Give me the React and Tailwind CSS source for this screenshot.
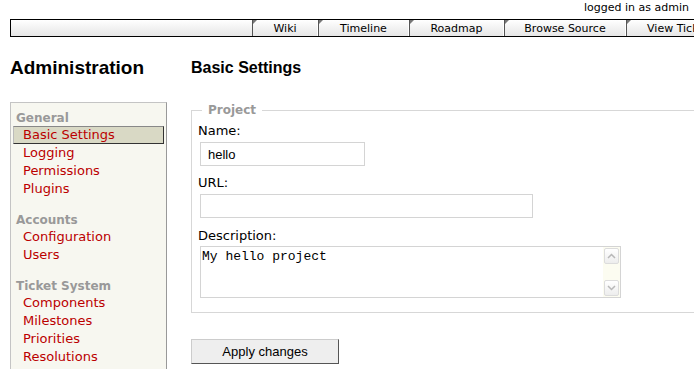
import React from 'react';

const tabs = [
  { label: 'Wiki', w: 'w-[66px]' },
  { label: 'Timeline', w: 'w-[91px]' },
  { label: 'Roadmap', w: 'w-[95px]' },
  { label: 'Browse Source', w: 'w-[122px]' },
  { label: 'View Tickets', w: 'w-[110px]' },
  { label: 'New Ticket', w: 'w-[100px]' },
];

const sections = [
  { title: 'General', items: ['Basic Settings', 'Logging', 'Permissions', 'Plugins'] },
  { title: 'Accounts', items: ['Configuration', 'Users'] },
  { title: 'Ticket System', items: ['Components', 'Milestones', 'Priorities', 'Resolutions'] },
];

function Chevron({ up }) {
  return (
    <svg width="9" height="6" viewBox="0 0 9 6" className="text-[#b8b8b8]">
      <path d={up ? 'M1 5 L4.5 1.5 L8 5' : 'M1 1 L4.5 4.5 L8 1'} fill="none" stroke="currentColor" strokeWidth="1.5" />
    </svg>
  );
}

export default function App() {
  return (
    <div className="h-[369px] w-[694px] overflow-hidden bg-white font-['DejaVu_Sans',sans-serif] text-black">
      {/* meta nav */}
      <div className="flex h-[19px] justify-end pr-[5px] pt-[1px] text-[11px] leading-[13px]">
        logged in as admin
      </div>

      {/* main nav */}
      <div className="ml-[10px] flex h-[18px] w-[900px] border border-black bg-gradient-to-b from-white to-[#e6e6e6] text-[11px] leading-[14px]">
        <div className="w-[241px]" />
        {tabs.map((t) => (
          <div key={t.label} className={`relative shrink-0 border-l border-r border-l-[#555] border-r-white pt-[2px] text-center ${t.w}`}>
            <span className="absolute left-0 top-0 h-0 w-0 border-r-[4px] border-t-[4px] border-r-transparent border-t-[#777]" />
            {t.label}
          </div>
        ))}
      </div>

      <div className="flex pl-[10px] pt-[19px]">
        {/* left column */}
        <div className="w-[157px] shrink-0">
          <h1 className="h-[24px] font-['Liberation_Sans',Arial,sans-serif] text-[19px] font-bold leading-[24px]">
            Administration
          </h1>
          <div className="mt-[22px] h-[300px] border border-[#c4c4c4] border-r-[#999] bg-[#f7f7f0] pt-[6px]">
            {sections.map((s, i) => (
              <div key={s.title} className={i > 0 ? 'mt-[13px]' : ''}>
                <div className="h-[17px] pl-[5px] text-[12px] font-bold leading-[18px] text-[#999]">{s.title}</div>
                {s.items.map((item) =>
                  item === 'Basic Settings' ? (
                    <div
                      key={item}
                      className="ml-[2px] mr-[2px] h-[18px] border border-t-[#888] border-l-[#bbb] border-r-[#333] border-b-[#333] bg-[#d9d9c5] pl-[9px] text-[13px] leading-[16px] text-[#b00]"
                    >
                      {item}
                    </div>
                  ) : (
                    <div key={item} className="h-[18px] pl-[12px] text-[13px] leading-[18px] text-[#b00]">
                      {item}
                    </div>
                  )
                )}
              </div>
            ))}
          </div>
        </div>

        {/* right column */}
        <div className="ml-[24px] w-[540px] shrink-0 pt-[2px]">
          <h2 className="h-[20px] font-['Liberation_Sans',Arial,sans-serif] text-[16px] font-bold leading-[20px]">
            Basic Settings
          </h2>

          <fieldset className="mt-[24px] border border-[#d7d7d7] pb-[14px] pl-[6px] pr-2 pt-[5px]">
            <legend className="ml-[4px] px-[6px] text-[12px] font-bold leading-[16px] text-[#999]">Project</legend>

            <label className="block text-[13px] leading-[16px]">Name:</label>
            <input
              readOnly
              value="hello"
              className="ml-[2px] mt-[3px] block h-[24px] w-[165px] border border-[#d4d4d4] px-[7px] font-['Liberation_Sans',Arial,sans-serif] text-[13px] outline-none"
            />

            <label className="mt-[9px] block text-[13px] leading-[16px]">URL:</label>
            <input
              readOnly
              value=""
              className="ml-[2px] mt-[3px] block h-[24px] w-[333px] border border-[#d4d4d4] px-[7px] font-['Liberation_Sans',Arial,sans-serif] text-[13px] outline-none"
            />

            <label className="mt-[10px] block text-[13px] leading-[16px]">Description:</label>
            <div className="ml-[2px] mt-[2px] flex h-[52px] w-[421px] border border-[#d4d4d4]">
              <div className="flex-1 pl-[1px] pt-[2px] font-['Liberation_Mono','Courier_New',monospace] text-[13px] leading-[16px]">
                My hello project
              </div>
              <div className="flex w-[17px] flex-col bg-[#fcfcf1] p-[1px]">
                <div className="flex h-[16px] items-center justify-center rounded-[2px] border border-[#dcdcdc] bg-gradient-to-b from-white to-[#ededed]">
                  <Chevron up />
                </div>
                <div className="flex-1" />
                <div className="flex h-[16px] items-center justify-center rounded-[2px] border border-[#dcdcdc] bg-gradient-to-b from-white to-[#ededed]">
                  <Chevron />
                </div>
              </div>
            </div>
          </fieldset>

          <button className="mt-[26px] block h-[25px] w-[148px] border border-[#ccc] border-b-[#555] border-r-[#555] bg-[#eee] font-['Liberation_Sans',Arial,sans-serif] text-[13px] leading-[23px]">
            Apply changes
          </button>
        </div>
      </div>
    </div>
  );
}
